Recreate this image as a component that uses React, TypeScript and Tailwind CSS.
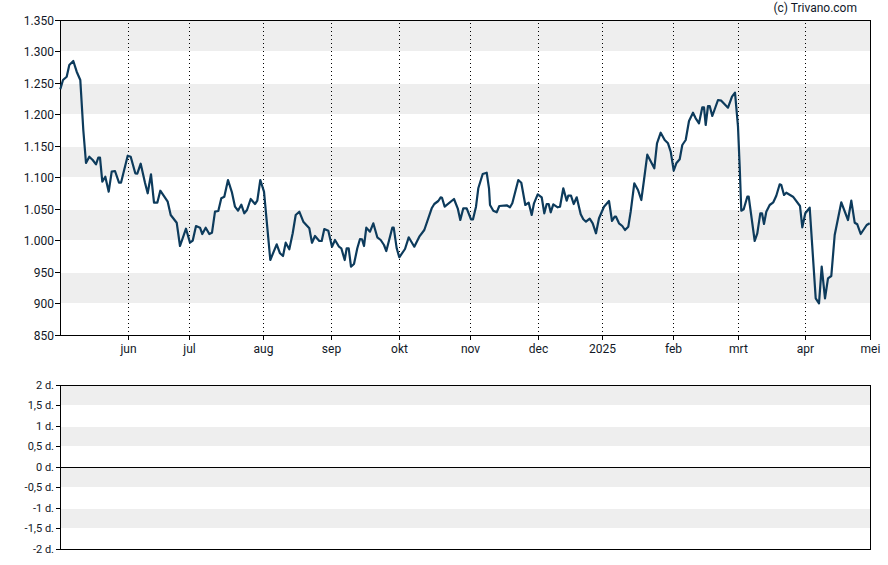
const pts = "60.3,89.3 63,80 66.7,76.7 69.3,65 73.3,61 76.7,71.7 80.3,80 83.3,130 86,163 89.3,156.7 92.7,160 96,164.3 98.3,157.7 100,157.7 102.3,181.7 105.3,176.7 108.7,191.7 111.7,171.7 115,171 119,182.7 121,182.7 127.7,155.7 130.7,156.7 135.3,173.3 137.3,173.7 140.7,163.7 145,182.7 147.7,193.3 151,174.3 154,202.7 157.3,202.7 160.3,190.7 167.7,201.7 170.7,215 176.7,222.7 180,246 186,228.7 190,242.7 192.7,240.7 196,226 200,227.7 202.3,234 205.7,227.7 209.3,234 212,232.7 215,211.7 218.3,211 221.3,198.3 224.3,196.7 228,180 232,192.7 235,206.7 238,210.7 241.3,204.7 244.3,213.3 247,210 250.7,199 255,204 257.3,200.7 260.3,180 264,191.7 270.3,260 276.7,244.3 280,253.3 283,256 285.7,242.7 289.3,249.3 292.7,233.3 295.7,215 299.3,211.7 303.3,221.7 309.3,228.3 312,242.7 315,236 319.3,241 321.7,241 324.3,229 328.3,230.7 332,246.7 335,240 339,246.7 341.3,248.3 344.7,260 346.7,248.3 348.7,248.3 351,266.7 354,264 357.3,248.3 360,239 362,239.3 364,246 366.3,227.7 370,231.7 373.3,223.3 377.3,237.3 380.7,240 384,245 386.3,251 392.3,227.7 393.7,227.7 396.7,248.3 399.3,257.3 405,249 408.7,237.3 414.3,246.7 419.3,236.7 424.3,230 431.7,208.3 434.3,204 438.3,201 440.7,197.3 442,197.7 444.7,206.7 454,199 457.7,208.3 460.3,220 463.3,208.3 466.7,208.3 471,219.3 473,219.3 476,206.7 478.3,188.3 482.7,174 486.7,172.7 489,188.3 490,205 493.3,210.7 496.7,212.3 499.3,206 506.7,205.3 510,207.3 512.3,203.3 518.3,180 521.3,182.7 525.3,205 528.7,202.7 531.7,215 534,203.3 537.7,194.3 541.7,197.3 544.3,213.3 546.7,204 548.7,204 550.7,212.3 553.3,204.3 557.7,207.3 560,206.7 563.3,188.3 566.7,200.7 568.3,195.7 571,195.7 573.7,204 576.7,197.3 580.7,214.3 583.3,219.3 586,221.7 589.7,218.7 592.7,223.3 596,233.3 599,218.3 604,206.7 609,201 612,221 614.7,216.7 616,216.7 619,223.3 622.3,226 625,230 628.3,226.7 630.7,211.7 634.3,183.3 638,190 641.3,200 644,180 647.3,154.7 654.3,168.3 657,143.3 660.7,132.7 664.7,140 668,143.3 670.7,151.7 673.7,170.7 676.3,163.3 679.7,159.3 682.3,145 685.7,140 689,121 693,112.7 695.7,118.3 699,123.3 702.3,107.3 704,107.3 705.7,125 708,106 709.7,106 712.3,116 718,100 721.3,100.7 728,107.7 732,96.7 735,92.7 738,126.7 739.7,166.7 741.3,210.7 743.7,209.3 747.3,196.7 748.7,196.7 754.7,241 757.3,233.3 760.3,213.3 762,213.3 764,224 766.3,211.7 769.7,205 773.3,202.3 776.3,195.7 779.7,184.3 781.3,185 784,195 786.3,192.7 793,196.7 800,206 802.3,227.3 805.3,213.3 809.7,207.7 815.7,298.3 819,303.3 821.7,266.7 825,298.3 828,278.3 831.3,276 834.7,235 841.3,202.3 848,220 851.3,200.7 854.7,222.7 857.3,224.3 860.7,234 866.7,225 869.7,223.3";

const FONT = "Roboto, sans-serif";
const INK = "#111827";

const yLabels = [
  ["1.350", 20], ["1.300", 51], ["1.250", 83], ["1.200", 114], ["1.150", 146], ["1.100", 177],
  ["1.050", 209], ["1.000", 240], ["950", 272], ["900", 303], ["850", 335],
] as const;
const months = [
  ["jun", 128], ["jul", 189], ["aug", 263], ["sep", 331], ["okt", 399], ["nov", 470],
  ["dec", 538], ["2025", 602], ["feb", 673], ["mrt", 738], ["apr", 805], ["mei", 870],
] as const;
const bands = [[20, 51], [84, 114], [147, 177], [210, 240], [273, 303]];
const lowLabels = [
  ["2 d.", 385], ["1,5 d.", 405], ["1 d.", 426], ["0,5 d.", 446], ["0 d.", 467], ["-0,5 d.", 487],
  ["-1 d.", 508], ["-1,5 d.", 528], ["-2 d.", 549],
] as const;
const lowBands = [[385, 405], [427, 446], [467, 487], [509, 528]];

function PriceChart() {
  return (
    <svg className="block overflow-visible" width={888} height={349} viewBox="0 16 888 349">
      {bands.map(([a, b]) => (
        <rect key={a} x={60} y={a} width={810} height={b - a} fill="#eeeeee" />
      ))}
      {months.map(([m, x]) =>
        m === "mei" ? null : (
          <line key={m} x1={x + 0.5} x2={x + 0.5} y1={23} y2={335} stroke="#000" strokeDasharray="1 3" />
        ),
      )}
      <rect x={60.5} y={20.5} width={810} height={315} fill="none" stroke="#000" />
      {yLabels.map(([t, y]) => (
        <g key={t}>
          <line x1={55} x2={60} y1={y + 0.5} y2={y + 0.5} stroke="#000" />
          <text x={54} y={y + 5} textAnchor="end" fontSize={12} fontFamily={FONT} fill={INK}>{t}</text>
        </g>
      ))}
      {months.map(([m, x]) => (
        <g key={m}>
          <line x1={x + 0.5} x2={x + 0.5} y1={336} y2={340} stroke="#000" />
          <text x={x + 0.5} y={353} textAnchor="middle" fontSize={12} fontFamily={FONT} fill={INK}>{m}</text>
        </g>
      ))}
      <polyline points={pts} fill="none" stroke="#0d3b5c" strokeWidth={2.2} strokeLinejoin="round" />
    </svg>
  );
}

function DaysChart() {
  return (
    <svg className="block" width={888} height={200} viewBox="0 365 888 200">
      {lowBands.map(([a, b]) => (
        <rect key={a} x={60} y={a} width={810} height={b - a} fill="#eeeeee" />
      ))}
      <rect x={60.5} y={385.5} width={810} height={164} fill="none" stroke="#000" />
      <line x1={60} x2={870} y1={467.5} y2={467.5} stroke="#000" />
      {lowLabels.map(([t, y]) => (
        <g key={t}>
          <line x1={56} x2={60} y1={y + 0.5} y2={y + 0.5} stroke="#000" />
          <text x={54} y={y + 4} textAnchor="end" fontSize={11} fontFamily={FONT} fill={INK}>{t}</text>
        </g>
      ))}
    </svg>
  );
}

export default function App() {
  return (
    <div className="w-[888px] h-[565px] bg-white overflow-hidden">
      <div className="h-4 flex justify-end pr-[31px] text-xs leading-4 text-gray-900 font-['Roboto',sans-serif]">
        (c) Trivano.com
      </div>
      <PriceChart />
      <DaysChart />
    </div>
  );
}
